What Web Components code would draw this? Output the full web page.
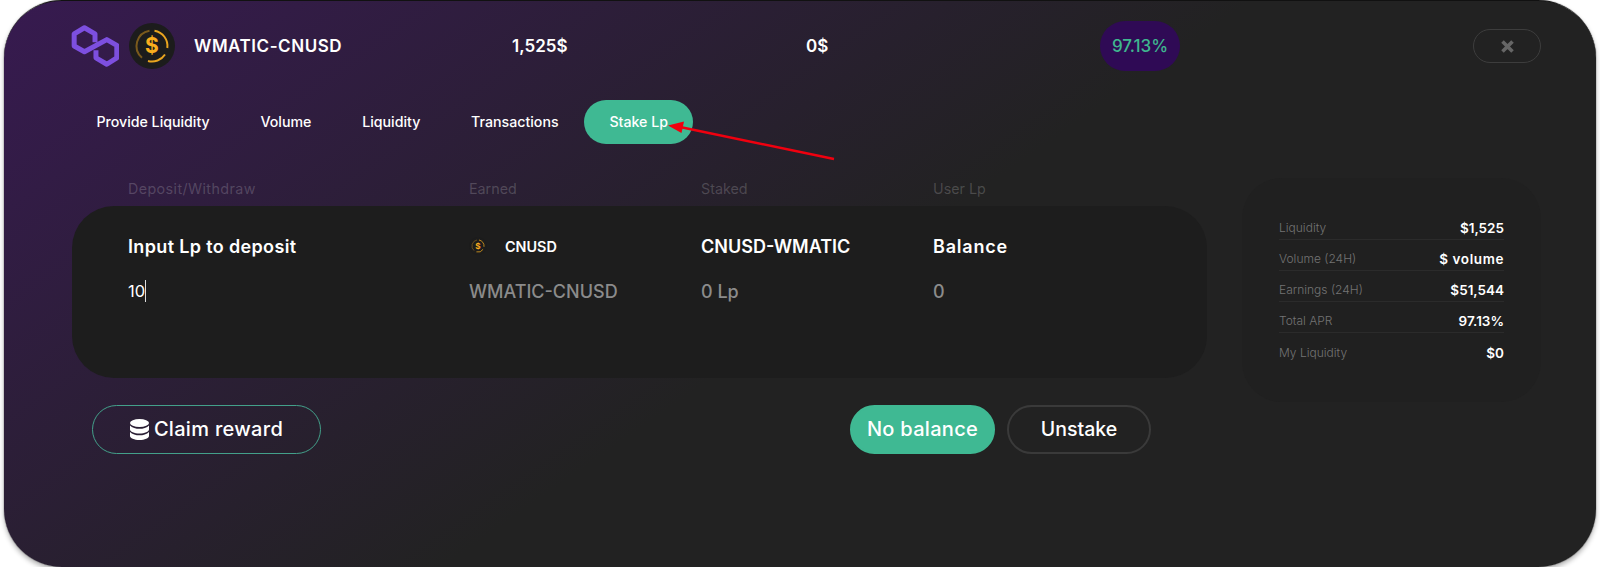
<!DOCTYPE html>
<html>
<head>
<meta charset="utf-8">
<title>Stake Lp</title>
<style>
  html, body { margin: 0; background: #fff; }
  body { font-family: Inter, "Liberation Sans", sans-serif; color: #fff; }
</style>
</head>
<body>
<pool-modal>
  <pool-header slot="header" name="WMATIC-CNUSD" liquidity="1,525$" volume="0$" apr="97.13%"></pool-header>
  <tab-bar slot="tabs" items="Provide Liquidity,Volume,Liquidity,Transactions,Stake Lp" active="Stake Lp"></tab-bar>
  <stake-table slot="table"></stake-table>
  <stake-actions slot="actions"></stake-actions>
  <stats-panel slot="stats"></stats-panel>
  <red-arrow slot="overlay"></red-arrow>
</pool-modal>

<script>
class PoolModal extends HTMLElement {
  constructor() {
    super();
    this.attachShadow({ mode: 'open' });
    this.shadowRoot.innerHTML = `
      <style>
        :host {
          display: block;
          position: relative;
          box-sizing: border-box;
          width: 1592px;
          height: 567px;
          margin-left: 4px;
          padding: 20px 0 0 67px;
          border-top: 1px solid #111;
          border-radius: 58px;
          background: linear-gradient(145deg, #371a50 0%, #222222 52%);
          box-shadow: 0 0 1px #000, 0 3px 5px rgba(0, 0, 0, .3);
        }
        .main { display: flex; gap: 35px; margin-top: 34px; }
        .left { width: 1135px; margin-left: 1px; }
      </style>
      <slot name="header"></slot>
      <slot name="tabs"></slot>
      <div class="main">
        <div class="left">
          <slot name="table"></slot>
          <slot name="actions"></slot>
        </div>
        <div><slot name="stats"></slot></div>
      </div>
      <slot name="overlay"></slot>
    `;
  }
}

class CoinIcon extends HTMLElement {
  constructor() {
    super();
    this.attachShadow({ mode: 'open' });
    this.shadowRoot.innerHTML = `
      <style>
        :host { display: block; width: 46px; height: 46px; }
        svg { display: block; width: 100%; height: 100%; }
        text { font-family: Inter, "Liberation Sans", sans-serif; font-weight: 700; }
      </style>
      <svg viewBox="0 0 46 46">
        <circle cx="23" cy="23" r="23" fill="#1c1c1c"/>
        <path d="M25.5 7.700A15.500 15.500 0 0 1 38.300 25" fill="none" stroke="#e9a51f" stroke-width="2"/>
        <path d="M36 31.500A15.500 15.500 0 0 1 19 38" fill="none" stroke="#e9a51f" stroke-width="2"/>
        <path d="M13 34.800A15.500 15.500 0 0 1 20.500 7.700" fill="none" stroke="#7a5a1c" stroke-width="2"/>
        <text x="23" y="30" text-anchor="middle" font-size="21" fill="#f9ad1e">$</text>
      </svg>
    `;
  }
}

class PoolHeader extends HTMLElement {
  constructor() {
    super();
    this.attachShadow({ mode: 'open' });
  }

  connectedCallback() {
    this.shadowRoot.innerHTML = `
      <style>
        :host {
          display: grid;
          grid-template-columns: 441px 294px 294px 373px 68px;
          align-items: center;
          height: 50px;
          font-size: 17px;
          font-weight: 600;
        }
        .pair { display: flex; align-items: center; }
        .poly { display: block; width: 48px; height: 44px; }
        coin-icon { margin-left: 10px; }
        .name { margin-left: 19px; letter-spacing: .55px; }
        .apr {
          display: flex;
          align-items: center;
          justify-content: center;
          width: 80px;
          height: 50px;
          border-radius: 25px;
          background: #2f0a55;
          color: #3fb68f;
          font-weight: 500;
        }
        .close {
          display: flex;
          align-items: center;
          justify-content: center;
          box-sizing: border-box;
          width: 68px;
          height: 34px;
          border: 1.5px solid #3d3d3d;
          border-radius: 17px;
        }
        .close svg { display: block; width: 15px; height: 15px; }
      </style>
      <div class="pair">
        <svg class="poly" viewBox="10 8 50 44">
          <path d="M35 26V17.300L24 11 13.300 17.300V30L24 36 47.300 23.300 57.700 29.300V42.300L47.300 49 36 42.300V34.300" fill="none" stroke="#7d4fdf" stroke-width="5.200" stroke-linejoin="round"/>
        </svg>
        <coin-icon></coin-icon>
        <span class="name">${this.getAttribute('name')}</span>
      </div>
      <div>${this.getAttribute('liquidity')}</div>
      <div>${this.getAttribute('volume')}</div>
      <div class="apr">${this.getAttribute('apr')}</div>
      <div class="close">
        <svg viewBox="0 0 15 15"><path d="M2.500 2.500L12.500 12.500M12.500 2.500L2.500 12.500" stroke="#666" stroke-width="3.600"/></svg>
      </div>
    `;
  }
}

class TabBar extends HTMLElement {
  constructor() {
    super();
    this.attachShadow({ mode: 'open' });
  }

  connectedCallback() {
    const active = this.getAttribute('active');
    const tabs = this.getAttribute('items').split(',').map((item) => {
      return `<div class="tab${item === active ? ' on' : ''}">${item}</div>`;
    }).join('');
    this.shadowRoot.innerHTML = `
      <style>
        :host { display: flex; height: 44px; margin-top: 29px; font-size: 14.2px; font-weight: 500; }
        .tab { display: flex; align-items: center; padding: 0 25.4px 2px; border-radius: 22px; }
        .on { background: #3fb993; }
      </style>
      ${tabs}
    `;
  }
}

class StakeTable extends HTMLElement {
  constructor() {
    super();
    this.attachShadow({ mode: 'open' });
    this.shadowRoot.innerHTML = `
      <style>
        :host { display: block; }
        .row { display: grid; grid-template-columns: 341px 232px 232px auto; padding-left: 56px; }
        .labels { height: 28px; font-size: 14.3px; line-height: 22px; color: rgba(255, 255, 255, .19); }
        .labels div:first-child { letter-spacing: .4px; }
        .card {
          box-sizing: border-box;
          height: 172px;
          padding-top: 28px;
          border-radius: 42px;
          background: #1d1d1d;
        }
        .card .row { align-items: center; height: 24px; font-size: 18px; }
        .head { font-weight: 600; }
        .lower { letter-spacing: .35px; }
        .bal { letter-spacing: .8px; }
        .vals { margin-top: 21px; color: #8b8b8b; font-weight: 500; }
        .vals .input { color: #fff; font-size: 16.5px; font-weight: 400; }
        .caret { display: inline-block; width: 1px; height: 22px; background: #ddd; vertical-align: -5px; }
        .token { display: flex; align-items: center; font-size: 14.4px; }
        .token coin-icon { width: 18px; height: 18px; margin-right: 18px; }
      </style>
      <div class="row labels">
        <div>Deposit/Withdraw</div><div>Earned</div><div>Staked</div><div>User Lp</div>
      </div>
      <div class="card">
        <div class="row head">
          <div class="lower">Input Lp to deposit</div>
          <div class="token"><coin-icon></coin-icon>CNUSD</div>
          <div>CNUSD-WMATIC</div>
          <div class="bal">Balance</div>
        </div>
        <div class="row vals">
          <div class="input">10<span class="caret"></span></div>
          <div>WMATIC-CNUSD</div>
          <div>0 Lp</div>
          <div>0</div>
        </div>
      </div>
    `;
  }
}

class PillButton extends HTMLElement {
  constructor() {
    super();
    this.attachShadow({ mode: 'open' });
    this.shadowRoot.innerHTML = `
      <style>
        :host {
          display: flex;
          align-items: center;
          justify-content: center;
          box-sizing: border-box;
          height: 49px;
          padding-bottom: 2px;
          border: 2px solid #3a3a3a;
          border-radius: 25px;
          font-size: 20px;
          font-weight: 500;
          letter-spacing: .3px;
        }
        :host([kind="primary"]) { border-color: #3fb993; background: #3fb993; }
        :host([kind="outline"]) { border: 1px solid #43a08a; }
      </style>
      <slot></slot>
    `;
  }
}

class StakeActions extends HTMLElement {
  constructor() {
    super();
    this.attachShadow({ mode: 'open' });
    this.shadowRoot.innerHTML = `
      <style>
        :host {
          display: flex;
          justify-content: space-between;
          margin-top: 27px;
          padding: 0 56px 0 20px;
        }
        .claim { width: 229px; gap: 5px; }
        .stack { display: block; width: 19px; height: 21px; margin-top: 2px; }
        .pair { display: flex; gap: 12px; }
        .balance { width: 145px; }
        .unstake { width: 144px; font-size: 19.5px; letter-spacing: 0; }
      </style>
      <pill-button class="claim" kind="outline">
        <svg class="stack" viewBox="0 0 19 21">
          <ellipse cx="9.500" cy="4" rx="9.500" ry="4" fill="#fff"/>
          <path d="M0 6.500C2 9 6 9.800 9.500 9.800S17 9 19 6.500V10.500C19 12.800 14.700 14.500 9.500 14.500S0 12.800 0 10.500Z" fill="#fff"/>
          <path d="M0 13C2 15.500 6 16.300 9.500 16.300S17 15.500 19 13V17C19 19.300 14.700 21 9.500 21S0 19.300 0 17Z" fill="#fff"/>
        </svg>
        Claim reward
      </pill-button>
      <div class="pair">
        <pill-button class="balance" kind="primary">No balance</pill-button>
        <pill-button class="unstake">Unstake</pill-button>
      </div>
    `;
  }
}

class StatsPanel extends HTMLElement {
  constructor() {
    super();
    this.attachShadow({ mode: 'open' });
  }

  connectedCallback() {
    const stats = [
      ['Liquidity', '$1,525'],
      ['Volume (24H)', '$ volume', 'wide'],
      ['Earnings (24H)', '$51,544'],
      ['Total APR', '97.13%'],
      ['My Liquidity', '$0'],
    ];
    const rows = stats.map(([label, value, extra]) => `
      <div class="row"><span class="label">${label}</span><span class="value ${extra || ''}">${value}</span></div>
    `).join('');
    this.shadowRoot.innerHTML = `
      <style>
        :host {
          display: block;
          box-sizing: border-box;
          width: 299px;
          height: 224px;
          padding: 31px 37px 0;
          border-radius: 40px;
          background: #202020;
        }
        .row {
          display: flex;
          justify-content: space-between;
          align-items: flex-end;
          box-sizing: border-box;
          height: 31px;
          padding-bottom: 2px;
          line-height: 18px;
          border-bottom: 1px solid #2b2b2b;
        }
        .row:last-child { border-bottom: 0; }
        .label { font-size: 12px; font-weight: 300; color: #737373; }
        .value { font-size: 13.5px; font-weight: 600; }
        .wide { letter-spacing: .6px; }
      </style>
      ${rows}
    `;
  }
}

class RedArrow extends HTMLElement {
  constructor() {
    super();
    this.attachShadow({ mode: 'open' });
    this.shadowRoot.innerHTML = `
      <style>
        :host { display: block; position: absolute; left: 656px; top: 115px; width: 185px; height: 50px; pointer-events: none; }
        svg { display: block; }
      </style>
      <svg width="185" height="50" viewBox="0 0 185 50">
        <path d="M174 43L20 11" stroke="#f0000f" stroke-width="2.600"/>
        <path d="M8 9.500L24 5.500 21.500 17Z" fill="#f0000f"/>
      </svg>
    `;
  }
}

customElements.define('pool-modal', PoolModal);
customElements.define('coin-icon', CoinIcon);
customElements.define('pool-header', PoolHeader);
customElements.define('tab-bar', TabBar);
customElements.define('stake-table', StakeTable);
customElements.define('pill-button', PillButton);
customElements.define('stake-actions', StakeActions);
customElements.define('stats-panel', StatsPanel);
customElements.define('red-arrow', RedArrow);
</script>
</body>
</html>
